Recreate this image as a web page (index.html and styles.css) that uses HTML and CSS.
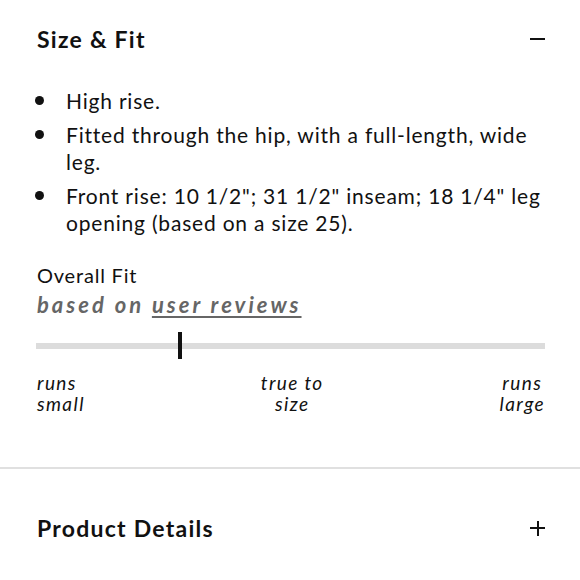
FILE: index.html
```html
<!DOCTYPE html>
<html lang="en">
<head>
<meta charset="utf-8">
<title>Size &amp; Fit</title>
<link rel="stylesheet" href="styles.css">
</head>
<body>
  <section class="panel">
    <div class="acc-head first">
      <h2 class="acc-title">Size &amp; Fit</h2>
      <span class="icon-minus" aria-hidden="true"></span>
    </div>
    <ul class="bullets">
      <li>High rise.</li>
      <li>Fitted through the hip, with a full-length, wide leg.</li>
      <li>Front rise: 10 1/2"; 31 1/2" inseam; 18 1/4" leg opening (based on a size 25).</li>
    </ul>
    <div class="fit">
      <div class="fit-title">Overall Fit</div>
      <div class="fit-sub">based on <a class="fit-link" href="#">user reviews</a></div>
      <div class="track">
        <div class="track-bar"></div>
        <div class="track-marker" style="left: 27.8%"></div>
      </div>
      <div class="labels">
        <div class="label label-left">runs<br>small</div>
        <div class="label label-mid">true to<br>size</div>
        <div class="label label-right">runs<br>large</div>
      </div>
    </div>
  </section>
  <div class="divider"></div>
  <section class="panel">
    <div class="acc-head second">
      <h2 class="acc-title">Product Details</h2>
      <span class="icon-plus" aria-hidden="true"></span>
    </div>
  </section>
</body>
</html>
```
FILE: styles.css
```css
* { box-sizing: border-box; }
html, body { margin: 0; padding: 0; background: #fff; }
body {
  font-family: Lato, "Open Sans", Arial, sans-serif;
  color: #111;
}
.panel { padding: 0 35px 0 37px; }
.acc-head {
  display: flex;
  justify-content: space-between;
  align-items: center;
  height: 30px;
}
.acc-head.first { margin-top: 24px; }
.acc-head.second { margin-top: 44px; }
.acc-title {
  margin: 0;
  font-size: 23px;
  font-weight: 700;
  line-height: 30px;
  letter-spacing: 1.25px;
}
.icon-minus, .icon-plus {
  position: relative;
  width: 15px;
  height: 15px;
}
.icon-minus::before, .icon-plus::before, .icon-plus::after {
  content: "";
  position: absolute;
  background: #111;
}
.icon-minus::before, .icon-plus::before {
  left: 0; right: 0; top: 6.5px; height: 2px;
}
.icon-plus::after {
  top: 0; bottom: 0; left: 6.5px; width: 2px;
}
.bullets {
  list-style: none;
  margin: 33px -1px 0 0;
  padding: 0;
  display: flex;
  flex-direction: column;
  gap: 7px;
}
.bullets li {
  display: flex;
  font-size: 21px;
  line-height: 27px;
  letter-spacing: 0.8px;
}
.bullets li::before {
  content: "";
  flex: 0 0 9px;
  height: 9px;
  margin: 9px 22px 0 -2px;
  border-radius: 50%;
  background: #111;
}
.fit { margin-top: 27px; }
.fit-title {
  font-size: 20px;
  line-height: 24px;
  letter-spacing: 0.8px;
}
.fit-sub {
  margin-top: 4.5px;
  font-size: 22px;
  line-height: 26px;
  font-weight: 700;
  font-style: italic;
  letter-spacing: 3px;
  color: #666;
}
.fit-link { color: #666; text-decoration: underline; text-underline-offset: 3px; }
.track {
  position: relative;
  height: 27px;
  margin-top: 14.5px;
  margin-left: -1px;
  display: flex;
  align-items: center;
}
.track-bar {
  width: 100%;
  height: 6px;
  background: #dcdcdc;
}
.track-marker {
  position: absolute;
  top: 0;
  width: 4px;
  height: 27px;
  background: #111;
}
.labels {
  display: flex;
  justify-content: space-between;
  margin-top: 13px;
  font-size: 19px;
  line-height: 21px;
  font-style: italic;
  letter-spacing: 1.4px;
}
.label-left { text-align: left; }
.label-mid { text-align: center; }
.label-right { text-align: center; }
.divider {
  height: 2px;
  background: #e0e0e0;
  margin-top: 53px;
}
```
